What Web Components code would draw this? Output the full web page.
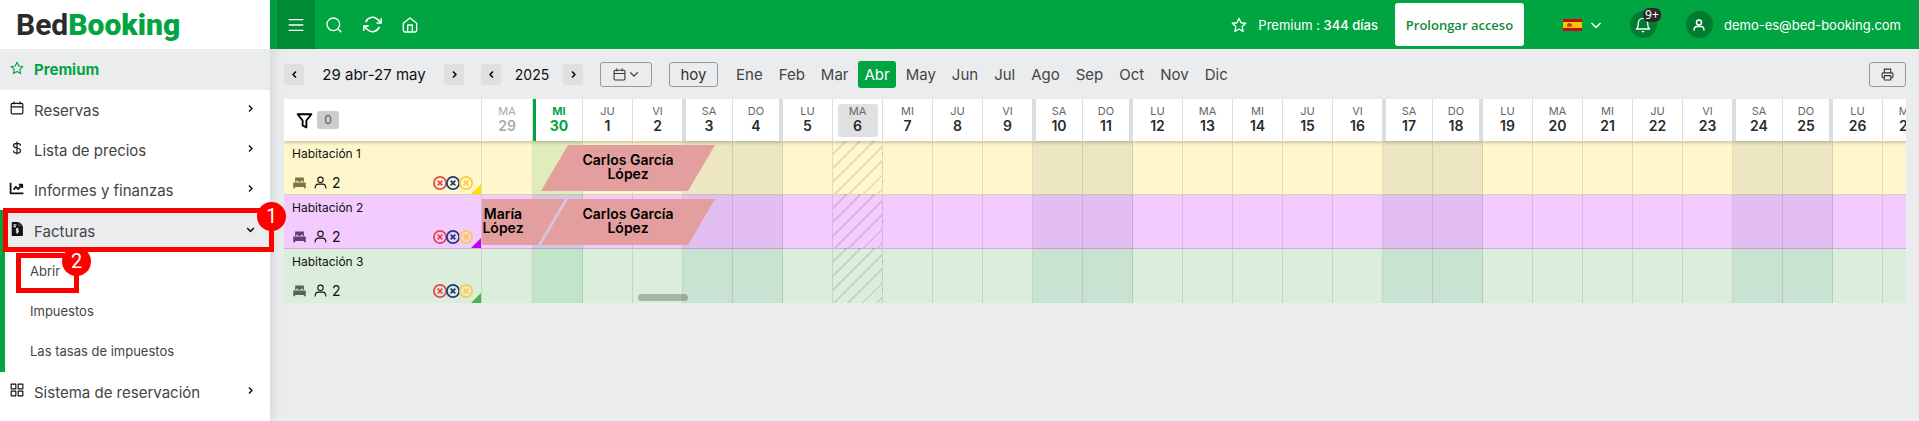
<!DOCTYPE html>
<html lang="es">
<head>
<meta charset="utf-8">
<title>BedBooking</title>
<style>
  body { margin: 0; font-family: Inter, "Open Sans", sans-serif; color: #222; background: #ebecee; }
</style>
</head>
<body>
<bb-app></bb-app>
<script>
const ICONS = {
  star: '<path d="M12 2l3 6.600 7 .8-5.200 4.900 1.400 7.200L12 18l-6.200 3.500 1.400-7.200L2 9.400l7-.8z"/>',
  calendar: '<rect x="2" y="4" width="20" height="18" rx="2"/><path d="M2 10h20M7 1v5M17 1v5"/>',
  dollar: '<path d="M12 1v22M18 8c0-3-3-4-6-4s-6 1-6 4 3 3.500 6 4 6 1.500 6 4.500-3 4-6 4-6-1-6-4"/>',
  chart: '<path d="M1 3v18h22M6 15l4-5 4 4 6-7M15 6h6v6" stroke-width="3"/>',
  invoice: '<path d="M4 1h10v7h7v15H4z" fill="currentColor"/><path d="M16 1v5h5z" fill="currentColor" stroke-width="1"/><path d="M6 5h5M6 8h4" stroke="#ebecee"/><path d="M15 12c-5-1.500-5 2.500-2.500 2.500s3 4-2.500 2.500M12.500 10v10" stroke="#ebecee"/>',
  grid: '<rect x="2" y="2" width="8" height="8"/><rect x="14" y="2" width="8" height="8"/><rect x="2" y="14" width="8" height="8"/><rect x="14" y="14" width="8" height="8"/>',
  right: '<path d="M8 4l8 8-8 8"/>',
  left: '<path d="M16 4l-8 8 8 8"/>',
  down: '<path d="M3 8l9 9 9-9"/>',
  menu: '<path d="M1 4h22M1 12h22M1 20h22"/>',
  search: '<circle cx="11" cy="11" r="9.500"/><path d="M18 18l5 5"/>',
  refresh: '<path d="M23 4v6h-6M1 20v-6h6"/><path d="M3.500 9a9 9 0 0 1 14.900-3.400L23 10M1 14l4.600 4.400A9 9 0 0 0 20.500 15"/>',
  home: '<path d="M2 9.500L12 1.500l10 8V20a2.500 2.500 0 0 1-2.500 2.500h-15A2.500 2.500 0 0 1 2 20z"/><path d="M8.500 22V12h7v10"/>',
  bell: '<path d="M2 18h20c-3-2-3-5-3-9a7 7 0 0 0-14 0c0 4 0 7-3 9zM10 22h4"/>',
  user: '<circle cx="12" cy="7" r="5"/><path d="M2 23c0-5 2-8 6-8h8c4 0 6 3 6 8"/>',
  printer: '<path d="M6 9V2h12v7M6 18H4a2 2 0 0 1-2-2v-5a2 2 0 0 1 2-2h16a2 2 0 0 1 2 2v5a2 2 0 0 1-2 2h-2"/><rect x="6" y="14" width="12" height="8"/>',
  filter: '<path d="M1 2h22l-8 10v11l-6-3v-8z"/>',
  bed: '<path d="M5 11V4h14v7h-2V9h-3v2h-4V9H7v2zM2 12h20v9h-3v-2H5v2H2z" fill="currentColor" stroke="none"/>',
  cross: '<circle cx="12" cy="12" r="10.500"/><path d="M8 8l8 8M16 8l-8 8"/>'
};

function define(name, css, html, setup) {
  const template = document.createElement('template');
  customElements.define(name, class extends HTMLElement {
    connectedCallback() {
      if (this.shadowRoot) return;
      template.innerHTML = '<style>*{box-sizing:border-box}button,a{font:inherit;color:inherit;text-decoration:none}button{border:0;padding:0;background:none;cursor:pointer}' +
        css + '</style>' + (typeof html === 'function' ? html(this) : html);
      this.attachShadow({ mode: 'open' }).append(template.content.cloneNode(true));
      if (setup) setup(this);
    }
  });
}

define('bb-icon',
  ':host{display:inline-flex;flex:none;width:16px;height:16px}svg{width:100%;height:100%;display:block;overflow:visible}',
  el => `<svg viewBox="0 0 24 24" fill="none" stroke="currentColor" stroke-width="${el.getAttribute('weight') || 2}" stroke-linejoin="round" aria-hidden="true">${ICONS[el.getAttribute('name')]}</svg>`);

define('bb-nav-item', `
  :host{display:block;position:relative;color:#444}
  a{display:flex;align-items:center;height:40px;padding:0 15px 0 10px;font-size:15px}
  .icon,.chev{color:#111;padding-bottom:4px;display:flex}
  .icon{width:24px}
  .icon bb-icon{width:14px;height:14px}
  .chev bb-icon{width:9px;height:9px}
  .text{flex:1}
  :host([active]) a{background:#ebecee;border-left:5px solid #00a541;padding-left:5px}
  :host([premium]) a{height:41px;background:#ebecee;font-weight:700;color:#00a541}
  :host([premium]) .icon{color:#00a541}
  :host([sub]) a{padding-left:30px;font-size:13px}
`, el => `<a href="#">${el.getAttribute('icon') ? `<span class="icon"><bb-icon name="${el.getAttribute('icon')}"></bb-icon></span>` : ''}<span class="text"><slot></slot></span>${el.getAttribute('chevron') ? `<span class="chev"><bb-icon name="${el.getAttribute('chevron')}" weight="4"></bb-icon></span>` : ''}</a><slot name="mark"></slot>`);

define('bb-step-mark', `
  :host{position:absolute;border:5px solid #f00;z-index:5;pointer-events:none}
  span{position:absolute;right:-17px;top:-11px;width:29px;height:29px;border-radius:50%;background:#f00;color:#fff;font:20px/28px Roboto,sans-serif;text-align:center}
`, '<span><slot></slot></span>');

define('bb-sidebar', `
  :host{display:block;flex:none;width:270px;background:#fff;box-shadow:0 0 14px rgba(0,0,0,.14);position:relative;z-index:3}
  .logo{display:flex;align-items:center;height:49px;padding-left:16px;font:700 30px/48px Roboto,sans-serif;color:#2b2b2b}
  .logo b{color:#00a541}
  .group{padding:1px 0;background:linear-gradient(#00a541,#00a541) left/5px 100% no-repeat}
  .first{inset:-3px -4px -1px 3px}
  .second{top:2px;bottom:-2px;left:16px;width:63px}
`, `
  <a class="logo" href="#"><span>Bed</span><b>Booking</b></a>
  <nav>
    <bb-nav-item premium icon="star">Premium</bb-nav-item>
    <bb-nav-item icon="calendar" chevron="right">Reservas</bb-nav-item>
    <bb-nav-item icon="dollar" chevron="right">Lista de precios</bb-nav-item>
    <bb-nav-item icon="chart" chevron="right">Informes y finanzas</bb-nav-item>
    <div class="group">
      <bb-nav-item active icon="invoice" chevron="down">Facturas<bb-step-mark slot="mark" class="first">1</bb-step-mark></bb-nav-item>
      <bb-nav-item sub>Abrir<bb-step-mark slot="mark" class="second">2</bb-step-mark></bb-nav-item>
      <bb-nav-item sub>Impuestos</bb-nav-item>
      <bb-nav-item sub>Las tasas de impuestos</bb-nav-item>
    </div>
    <bb-nav-item icon="grid" chevron="right">Sistema de reservación</bb-nav-item>
  </nav>`);

define('bb-topbar', `
  :host{display:flex;align-items:center;height:49px;background:#00a541;color:#fff;padding:0 18px 0 7px;font-size:13px}
  .tool{width:38px;height:49px;display:grid;place-items:center}
  .tool.on{background:#008c37}
  .spacer{flex:1}
  .status{display:flex;align-items:center;gap:11px;margin-right:17px;white-space:pre}
  strong{font-weight:500}
  .extend{width:129px;height:43px;border-radius:3px;background:#fff;color:#128a3c;font:600 13px "Open Sans",sans-serif;margin-right:39px}
  .lang{display:flex;align-items:center;gap:8px;margin-right:28px}
  .flag{width:19px;height:12px;display:block}
  .lang bb-icon{width:12px;height:12px}
  .round{position:relative;width:27px;height:27px;border-radius:50%;background:#007c31;display:grid;place-items:center}
  .bell{margin-right:29px}
  .bell em{position:absolute;left:13px;top:-3px;width:18px;height:14px;border-radius:6px;background:#2a2a2a;font:12px/13px "Noto Sans",sans-serif;text-align:center}
  .user bb-icon{width:12px;height:12px}
  .account{display:flex;align-items:center;gap:11px}
`, `
  <button class="tool on" aria-label="Menú"><bb-icon name="menu"></bb-icon></button>
  <button class="tool" aria-label="Buscar"><bb-icon name="search"></bb-icon></button>
  <button class="tool" aria-label="Actualizar"><bb-icon name="refresh" style="width:19px;height:19px"></bb-icon></button>
  <button class="tool" aria-label="Inicio"><bb-icon name="home"></bb-icon></button>
  <span class="spacer"></span>
  <span class="status"><bb-icon name="star"></bb-icon><span>Premium : <strong>344 días</strong></span></span>
  <button class="extend">Prolongar acceso</button>
  <button class="lang" aria-label="Idioma"><svg class="flag" viewBox="0 0 19 12"><path fill="#c60b1e" d="M0 0h19v12H0z"/><path fill="#ffc400" d="M0 3h19v6H0z"/><path fill="#ad6a12" d="M4 5h1V4h3v1h1v3H4z"/><path fill="#c8323b" d="M5 5h3v2H5z"/></svg><bb-icon name="down" weight="3"></bb-icon></button>
  <button class="round bell" aria-label="Avisos"><bb-icon name="bell"></bb-icon><em>9+</em></button>
  <a class="account" href="#"><span class="round user"><bb-icon name="user" weight="3"></bb-icon></span><span>demo-es@bed-booking.com</span></a>`);

define('bb-toolbar', `
  :host{display:flex;align-items:center;height:50px}
  .step{width:20px;height:21px;border-radius:3px;background:#dedfdf;color:#000;display:grid;place-items:center}
  .step bb-icon{width:9px;height:9px}
  .range{width:140px;text-align:center;font-size:15px;color:#111}
  .year{width:62px;text-align:center;font-size:14px;color:#111}
  .outline{height:25px;border:1px solid #999;border-radius:3px;display:flex;align-items:center;justify-content:center;gap:3px;color:#333}
  .outline bb-icon{width:13px;height:13px}
  .outline .small{width:10px;height:10px}
  .gap{width:17px}
  .months{display:flex;gap:4px;margin-left:12px;flex:1}
  .months button{height:27px;padding:0 6px;border-radius:3px;font-size:15px;color:#444}
  .months .on{background:#00a541;color:#fff}
`, `
  <button class="step" aria-label="Anterior"><bb-icon name="left" weight="4"></bb-icon></button>
  <span class="range">29 abr-27 may</span>
  <button class="step" aria-label="Siguiente"><bb-icon name="right" weight="4"></bb-icon></button>
  <span class="gap"></span>
  <button class="step" aria-label="Año anterior"><bb-icon name="left" weight="4"></bb-icon></button>
  <span class="year">2025</span>
  <button class="step" aria-label="Año siguiente"><bb-icon name="right" weight="4"></bb-icon></button>
  <span class="gap"></span>
  <button class="outline" style="width:52px" aria-label="Fecha"><bb-icon name="calendar"></bb-icon><bb-icon class="small" name="down" weight="3"></bb-icon></button>
  <span class="gap"></span>
  <button class="outline" style="width:49px;font-size:15px">hoy</button>
  <span class="months">${['Ene','Feb','Mar','Abr','May','Jun','Jul','Ago','Sep','Oct','Nov','Dic'].map(m => `<button${m === 'Abr' ? ' class="on"' : ''}>${m}</button>`).join('')}</span>
  <button class="outline" style="width:37px" aria-label="Imprimir"><bb-icon name="printer"></bb-icon></button>`);

const WEEK = ['LU', 'MA', 'MI', 'JU', 'VI', 'SA', 'DO'];
const DAYS = Array.from({ length: 29 }, (_, i) => ({
  name: WEEK[(i + 1) % 7],
  number: i < 2 ? 29 + i : i - 1,
  kind: i === 0 ? 'past' : i === 1 ? 'start' : i === 7 ? 'now' : ['', '', '', '', 'sat', 'sun', ''][i % 7]
}));
const ROOMS = [
  { name: 'Habitación 1', bg: '#fff7cc', accent: '#ffe100', bed: '#80733f', stays: [{ day: 1, left: 8, width: 174, guest: 'Carlos García López' }] },
  { name: 'Habitación 2', bg: '#f3cbff', accent: '#c400f5', bed: '#5f3f73', stays: [{ day: 0, left: -41, width: 124, guest: 'María López' }, { day: 1, left: 8, width: 174, guest: 'Carlos García López' }] },
  { name: 'Habitación 3', bg: '#dbeedb', accent: '#4caf50', bed: '#536653', stays: [] }
];

define('bb-calendar', `
  :host{display:block;position:relative;isolation:isolate;overflow:hidden}
  table{border-collapse:separate;border-spacing:0;table-layout:fixed;width:0}
  col{width:50px} col.rooms{width:198px} col.past{width:51px}
  th,td{padding:0;font-weight:400;text-align:left;vertical-align:top}
  thead th{height:42px;background:#fff;border-right:1px solid #ddd;position:relative;z-index:4;box-shadow:0 2px 3px rgba(0,0,0,.2);clip-path:inset(0 0 -6px 0)}
  .filter{display:flex;align-items:center;gap:5px;height:42px;padding-left:13px;color:#000}
  .filter bb-icon{width:15px;height:15px}
  .count{width:22px;height:18px;border-radius:3px;background:#ccc;color:#555;font-size:12px;line-height:18px;text-align:center}
  .day{display:block;margin:5px auto 0;width:40px;height:33px;border-radius:3px;text-align:center;font-size:11px;line-height:14px;color:#666}
  .day b{display:block;font-size:14px;font-weight:600;line-height:16px;color:#2b2b2b}
  thead .past .day,thead .past b{color:#aaa}
  thead .start{border-left:3px solid #00a541}
  thead .start .day,thead .start b{color:#00a541;font-weight:700}
  thead .sat{border-left:3px solid #ddd}
  thead .sun{border-right:4px solid #ddd}
  thead .now .day{background:#e0e0e0}
  tbody th,tbody td{height:54px;border-right:1px solid rgba(0,0,0,.1);border-bottom:1px solid rgba(0,0,0,.14);position:relative}
  tbody tr:last-child>*{border-bottom:0}
  tbody tr,tbody th{background-color:var(--room)}
  tbody th{z-index:3}
  td.sat,td.sun{background:rgba(20,40,80,.08)}
  td.start{background:rgba(0,165,65,.12)}
  tr:last-child td.sat,tr:last-child td.sun{background:rgba(0,100,110,.08)}
  td.now{background:repeating-linear-gradient(135deg,transparent 0 8px,rgba(0,0,0,.1) 8px 10px)}
  .name{display:block;padding:5px 8px 0;font-size:12px;line-height:16px;color:#111}
  .meta{display:flex;align-items:center;padding:11px 0 0 8px;height:30px;font-size:14px;color:#111}
  .meta bb-icon{width:13px;height:13px}
  .meta .bed{color:var(--bed);width:15px;height:15px}
  .meta .who{margin:0 5px 0 7px}
  .off{display:flex;margin-left:auto;margin-right:9px}
  .off bb-icon{width:14px;height:14px;margin-right:-1px}
  .corner{position:absolute;right:0;bottom:0;width:10px;height:10px;background:var(--accent);clip-path:polygon(100% 0,100% 100%,0 100%)}
  .stay{position:absolute;z-index:2;top:4px;height:46px;background:#e39f9d;clip-path:polygon(27px 0,100% 0,calc(100% - 27px) 100%,0 100%);display:grid;place-items:center;text-align:center;font-size:14px;line-height:14px;font-weight:600;color:#000;padding:0 32px 2px}
  .thumb{position:absolute;z-index:5;left:354px;bottom:2px;width:50px;height:7px;border-radius:4px;background:rgba(0,0,0,.24)}
`, `
  <table>
    <colgroup><col class="rooms">${DAYS.map(d => `<col class="${d.kind}">`).join('')}</colgroup>
    <thead><tr><th scope="col"><span class="filter"><bb-icon name="filter" weight="3"></bb-icon><span class="count">0</span></span></th>
      ${DAYS.map(d => `<th scope="col" class="${d.kind}"><span class="day">${d.name}<b>${d.number}</b></span></th>`).join('')}</tr></thead>
    <tbody>${ROOMS.map(r => `<tr style="--room:${r.bg};--accent:${r.accent};--bed:${r.bed}">
      <th scope="row"><span class="name">${r.name}</span>
        <span class="meta"><bb-icon class="bed" name="bed"></bb-icon><bb-icon class="who" name="user"></bb-icon>2
          <span class="off">${['#e24a50', '#1f3a7a', '#ffcb3d'].map(c => `<bb-icon name="cross" weight="3" style="color:${c}"></bb-icon>`).join('')}</span></span>
        <span class="corner"></span></th>
      ${DAYS.map((d, i) => `<td class="${d.kind}">${r.stays.filter(s => s.day === i).map(s => `<div class="stay" style="left:${s.left}px;width:${s.width}px">${s.guest}</div>`).join('')}</td>`).join('')}</tr>`).join('')}</tbody>
  </table>
  <span class="thumb"></span>`);

define('bb-app', `
  :host{display:flex;min-height:100vh}
  main{flex:1;min-width:0}
  .page{padding:0 13px 0 14px}
`, `
  <bb-sidebar></bb-sidebar>
  <main><bb-topbar></bb-topbar><div class="page"><bb-toolbar></bb-toolbar><bb-calendar></bb-calendar></div></main>`);
</script>
</body>
</html>
